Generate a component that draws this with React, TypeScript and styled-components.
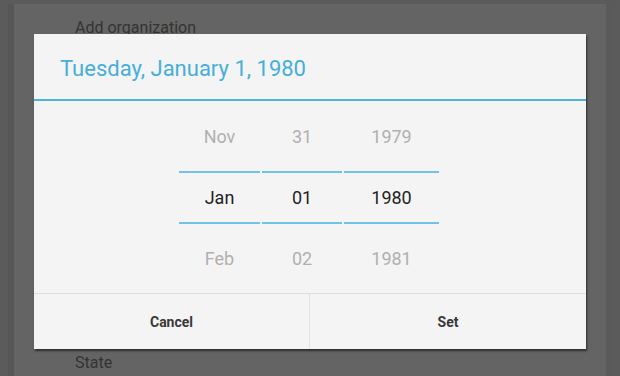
import React from "react";
import styled, { createGlobalStyle } from "styled-components";

const Global = createGlobalStyle`
  html, body { margin: 0; padding: 0; background: #5b5b5b; }
  body { width: 620px; height: 376px; overflow: hidden; font-family: Roboto, "Noto Sans", sans-serif; }
  *, *::before, *::after { box-sizing: border-box; }
`;

const Screen = styled.div`
  position: relative;
  width: 620px;
  height: 376px;
  background: #5b5b5b;
  padding-top: 4px;
`;

const Activity = styled.div`
  margin: 0 8px 0 8px;
  height: 372px;
  background: #646464;
  border-left: 6px solid #565656;
  border-right: 6px solid #5a5a5a;
  display: flex;
  flex-direction: column;
  justify-content: space-between;
  padding: 14px 0 0 61px;
`;

const FieldLabel = styled.div<{ $bottom?: boolean }>`
  font-size: 16px;
  color: #333;
  line-height: 20px;
  margin-bottom: ${(p) => (p.$bottom ? "3px" : "0")};
`;

const Overlay = styled.div`
  position: absolute;
  inset: 0;
  padding: 34px 0 0 34px;
`;

const Dialog = styled.div`
  width: 552px;
  height: 315px;
  background: #f4f4f4;
  box-shadow: 1px 2px 2px rgba(0, 0, 0, 0.55);
  display: flex;
  flex-direction: column;
`;

const TitleBar = styled.div`
  flex: none;
  height: 67px;
  border-bottom: 2px solid #4fb3de;
  display: flex;
  align-items: center;
  padding-left: 26px;
`;

const Title = styled.div`
  font-size: 22px;
  color: #45afd9;
  line-height: 26px;
  margin-top: 4px;
`;

const Picker = styled.div`
  flex: 1;
  display: flex;
  justify-content: center;
  gap: 2px;
  padding-right: 2px;
`;

const Column = styled.div<{ $w: number }>`
  width: ${(p) => p.$w}px;
  display: flex;
  flex-direction: column;
`;

const Cell = styled.div<{ $selected?: boolean; $h: number }>`
  flex: none;
  height: ${(p) => p.$h}px;
  display: flex;
  align-items: center;
  justify-content: center;
  font-size: 18px;
  font-weight: 400;
  color: ${(p) => (p.$selected ? "#1f1f1f" : "#b0b0b0")};
  ${(p) =>
    p.$selected
      ? "border-top: 2px solid #6fc3e3; border-bottom: 2px solid #6fc3e3;"
      : ""}
`;

const Buttons = styled.div`
  flex: none;
  height: 56px;
  border-top: 1px solid #dedede;
  display: grid;
  grid-template-columns: 276px 1fr;
`;

const Button = styled.div<{ $divider?: boolean }>`
  display: flex;
  align-items: center;
  justify-content: center;
  font-size: 14px;
  font-weight: 700;
  color: #383838;
  ${(p) => (p.$divider ? "border-right: 1px solid #e2e2e2;" : "")}
`;

const columns = [
  { w: 81, values: ["Nov", "Jan", "Feb"] },
  { w: 80, values: ["31", "01", "02"] },
  { w: 95, values: ["1979", "1980", "1981"] },
];

export default function App() {
  return (
    <>
      <Global />
      <Screen>
        <Activity>
          <FieldLabel>Add organization</FieldLabel>
          <FieldLabel $bottom>State</FieldLabel>
        </Activity>
        <Overlay>
          <Dialog>
            <TitleBar>
              <Title>Tuesday, January 1, 1980</Title>
            </TitleBar>
            <Picker>
              {columns.map((c, i) => (
                <Column key={i} $w={c.w}>
                  <Cell $h={70}>{c.values[0]}</Cell>
                  <Cell $h={53} $selected>
                    {c.values[1]}
                  </Cell>
                  <Cell $h={69}>{c.values[2]}</Cell>
                </Column>
              ))}
            </Picker>
            <Buttons>
              <Button $divider>Cancel</Button>
              <Button>Set</Button>
            </Buttons>
          </Dialog>
        </Overlay>
      </Screen>
    </>
  );
}
